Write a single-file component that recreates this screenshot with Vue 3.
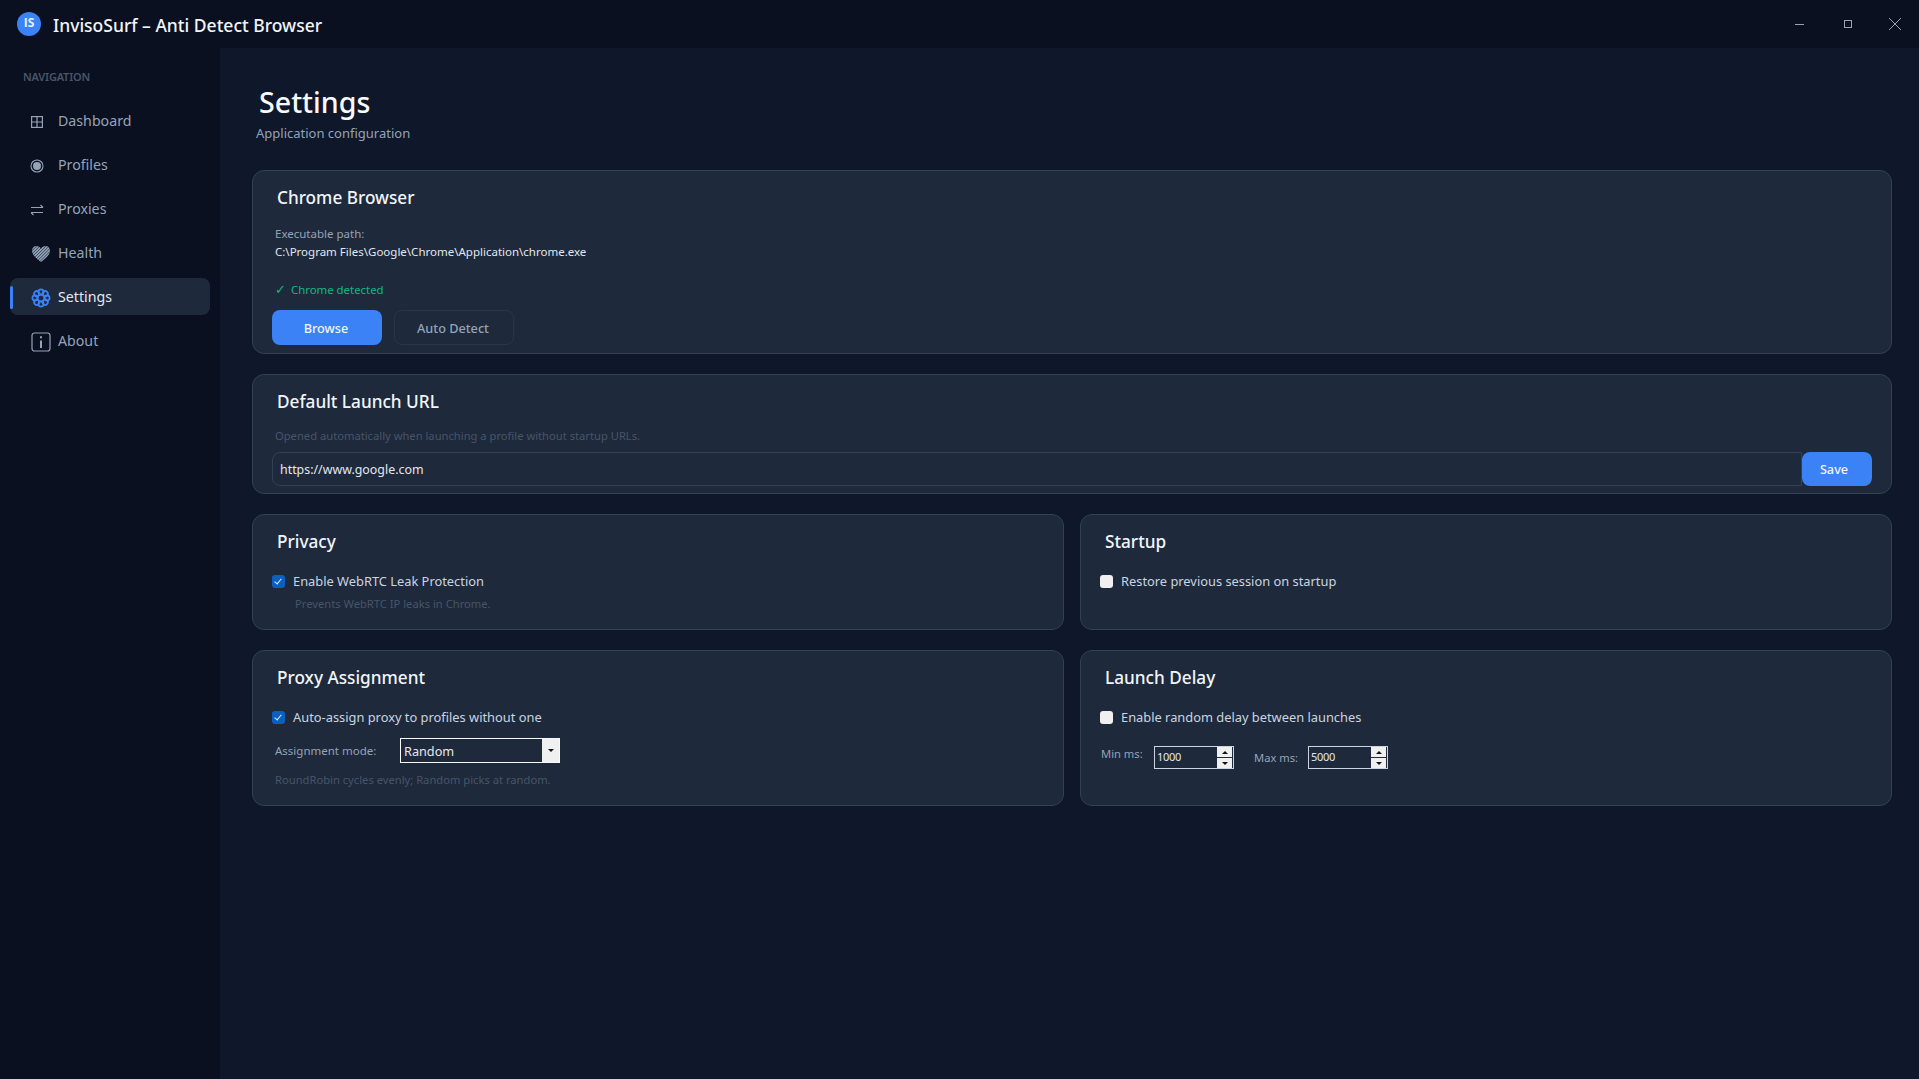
<script setup>
const navItems = [
  { label: "Dashboard", icon: "grid" },
  { label: "Profiles", icon: "radio" },
  { label: "Proxies", icon: "swap" },
  { label: "Health", icon: "heart" },
  { label: "Settings", icon: "gear", active: true },
  { label: "About", icon: "info" }
];
const petals = [0, 45, 90, 135, 180, 225, 270, 315];
</script>

<template>
  <div class="window">
    <header class="titlebar">
      <div class="logo">IS</div>
      <div class="app-title">InvisoSurf – Anti Detect Browser</div>
      <div class="win-controls">
        <svg class="win-min" width="12" height="12" viewBox="0 0 12 12"><path d="M1 6.5h9" stroke="#94a3b8" stroke-width="1" /></svg>
        <svg class="win-max" width="12" height="12" viewBox="0 0 12 12"><rect x="2.5" y="2.5" width="7" height="7" fill="none" stroke="#94a3b8" stroke-width="1" /></svg>
        <svg class="win-close" width="14" height="14" viewBox="0 0 14 14"><path d="M1 1l12 12M13 1L1 13" stroke="#94a3b8" stroke-width="1" /></svg>
      </div>
    </header>

    <div class="body">
      <aside class="sidebar">
        <div class="nav-heading">NAVIGATION</div>
        <nav class="nav">
          <div v-for="item in navItems" :key="item.label" class="nav-item" :class="{ active: item.active }">
            <span class="nav-icon">
              <svg v-if="item.icon === 'grid'" width="14" height="14" viewBox="0 0 14 14" fill="none" stroke="#94a3b8" stroke-width="1.2">
                <rect x="1.6" y="1.6" width="10.8" height="10.8" />
                <path d="M7 1.6v10.8M1.6 7h10.8" />
              </svg>
              <svg v-else-if="item.icon === 'radio'" width="14" height="14" viewBox="0 0 14 14">
                <circle cx="7" cy="7" r="6" fill="none" stroke="#94a3b8" stroke-width="1.1" />
                <circle cx="7" cy="7" r="4" fill="#94a3b8" />
              </svg>
              <svg v-else-if="item.icon === 'swap'" width="14" height="12" viewBox="0 0 14 12" fill="none" stroke="#94a3b8" stroke-width="1.1">
                <path d="M1 3.5h12M10.5 1L13 3.5" />
                <path d="M13 8.5H1M3.5 11L1 8.5" />
              </svg>
              <svg v-else-if="item.icon === 'heart'" class="wide-icon" width="20" height="18" viewBox="0 0 20 18">
                <defs>
                  <pattern id="hatch" width="2.2" height="2.2" patternUnits="userSpaceOnUse" patternTransform="rotate(45)">
                    <rect width="2.2" height="2.2" fill="#94a3b8" />
                    <rect width="0.8" height="2.2" fill="#3b4a5e" />
                  </pattern>
                </defs>
                <path d="M10 17C5 13 1 10 1 5.6 1 3 3 1 5.4 1 7.3 1 9 2 10 3.8 11 2 12.7 1 14.6 1 17 1 19 3 19 5.6 19 10 15 13 10 17z" fill="url(#hatch)" />
              </svg>
              <svg v-else-if="item.icon === 'gear'" class="wide-icon" width="20" height="20" viewBox="0 0 20 20" fill="none" stroke="#3b82f6" stroke-width="1.7">
                <circle v-for="deg in petals" :key="deg" cx="10" cy="4" r="2.6" :transform="`rotate(${deg} 10 10)`" />
                <circle cx="10" cy="10" r="3.4" />
              </svg>
              <svg v-else class="wide-icon" width="20" height="20" viewBox="0 0 20 20" fill="none" stroke="#94a3b8">
                <rect x="1" y="1" width="18" height="18" rx="2.5" stroke-width="1.2" />
                <path d="M10 8.5V16" stroke-width="2" />
                <path d="M10 4.2v2" stroke-width="2" />
              </svg>
            </span>
            <span class="nav-label">{{ item.label }}</span>
          </div>
        </nav>
      </aside>

      <main class="content">
        <h1 class="page-title">Settings</h1>
        <p class="page-sub">Application configuration</p>

        <section class="card chrome-card">
          <h2 class="card-title">Chrome Browser</h2>
          <div class="muted-label">Executable path:</div>
          <div class="path">C:\Program Files\Google\Chrome\Application\chrome.exe</div>
          <div class="detected"><span class="tick">✓</span> Chrome detected</div>
          <div class="btn-row">
            <div class="btn primary browse">Browse</div>
            <div class="btn ghost">Auto Detect</div>
          </div>
        </section>

        <section class="card url-card">
          <h2 class="card-title">Default Launch URL</h2>
          <div class="hint">Opened automatically when launching a profile without startup URLs.</div>
          <div class="url-row">
            <div class="url-input">https://www.google.com</div>
            <div class="btn primary save">Save</div>
          </div>
        </section>

        <div class="two-col">
          <section class="card short-card">
            <h2 class="card-title">Privacy</h2>
            <label class="check-row"><input type="checkbox" class="cb" checked /><span>Enable WebRTC Leak Protection</span></label>
            <div class="hint indented">Prevents WebRTC IP leaks in Chrome.</div>
          </section>
          <section class="card short-card">
            <h2 class="card-title">Startup</h2>
            <label class="check-row"><input type="checkbox" class="cb" /><span>Restore previous session on startup</span></label>
          </section>
        </div>

        <div class="two-col">
          <section class="card tall-card">
            <h2 class="card-title">Proxy Assignment</h2>
            <label class="check-row"><input type="checkbox" class="cb" checked /><span>Auto-assign proxy to profiles without one</span></label>
            <div class="mode-row">
              <span class="muted-label mode-label">Assignment mode:</span>
              <div class="select">
                <span class="select-value">Random</span>
                <span class="select-arrow"><i class="tri down"></i></span>
              </div>
            </div>
            <div class="hint mode-hint">RoundRobin cycles evenly; Random picks at random.</div>
          </section>
          <section class="card tall-card">
            <h2 class="card-title">Launch Delay</h2>
            <label class="check-row"><input type="checkbox" class="cb" /><span>Enable random delay between launches</span></label>
            <div class="delay-row">
              <span class="muted-label min-label">Min ms:</span>
              <div class="spin">
                <span class="spin-value">1000</span>
                <span class="spin-btns"><b><i class="tri up"></i></b><b><i class="tri down"></i></b></span>
              </div>
              <span class="muted-label max-label">Max ms:</span>
              <div class="spin">
                <span class="spin-value">5000</span>
                <span class="spin-btns"><b><i class="tri up"></i></b><b><i class="tri down"></i></b></span>
              </div>
            </div>
          </section>
        </div>
      </main>
    </div>
  </div>
</template>

<style>
html,
body {
  margin: 0;
  background: #0f172a;
}
</style>

<style scoped>
.window {
  width: 100vw;
  height: 100vh;
  display: flex;
  flex-direction: column;
  overflow: hidden;
  background: #0f172a;
  color: #e2e8f0;
  font-family: "Noto Sans", "Open Sans", sans-serif;
}

.titlebar {
  height: 48px;
  flex: none;
  display: flex;
  align-items: center;
  padding-left: 17px;
  background: #0a1020;
}

.logo {
  width: 24px;
  height: 24px;
  border-radius: 50%;
  background: #3b82f6;
  color: #e8f0ff;
  font-family: "Open Sans", sans-serif;
  font-size: 12px;
  font-weight: 700;
  line-height: 22px;
  text-align: center;
}

.app-title {
  margin: 2px 0 0 12px;
  font-size: 17.5px;
  font-weight: 500;
  color: #f1f5f9;
}

.win-controls {
  margin-left: auto;
  display: flex;
  align-items: center;
  margin-right: 17px;
}

.win-min {
  margin-right: 36px;
}

.win-max {
  margin-right: 34px;
}

.body {
  flex: 1;
  display: flex;
  min-height: 0;
}

.sidebar {
  width: 220px;
  flex: none;
  padding: 21px 10px 0;
  box-sizing: border-box;
  background: #0a1020;
}

.nav-heading {
  margin-left: 13px;
  font-size: 11px;
  font-weight: 600;
  line-height: 16px;
  color: #475569;
  letter-spacing: -0.2px;
}

.nav {
  margin-top: 17px;
  display: flex;
  flex-direction: column;
  gap: 7px;
}

.nav-item {
  height: 37px;
  display: flex;
  align-items: center;
  border-radius: 8px;
  font-size: 14.2px;
  color: #94a3b8;
}

.nav-item.active {
  background: #1e293b;
  color: #e2e8f0;
  position: relative;
}

.nav-item.active::before {
  content: "";
  position: absolute;
  left: 0;
  top: 8px;
  bottom: 6px;
  width: 3px;
  border-radius: 2px;
  background: #3b82f6;
}

.nav-icon {
  width: 48px;
  padding-left: 20px;
  padding-top: 3px;
  box-sizing: border-box;
  display: flex;
  align-items: center;
  flex: none;
}

.wide-icon {
  margin-left: 1px;
}

.content {
  flex: 1;
  min-width: 0;
  padding: 34px 27px 0 32px;
  box-sizing: border-box;
}

.page-title {
  margin: 0 0 0 7px;
  font-size: 28.6px;
  font-weight: 500;
  line-height: 40px;
  color: #f8fafc;
}

.page-sub {
  margin: 1px 0 0 4px;
  font-size: 13px;
  line-height: 20px;
  color: #94a3b8;
}

.card {
  box-sizing: border-box;
  border: 1px solid #334155;
  border-radius: 12px;
  background: #1e293b;
  padding: 13px 20px 0;
}

.card-title {
  margin: 0 0 0 4px;
  font-size: 17.2px;
  font-weight: 500;
  line-height: 28px;
  color: #f1f5f9;
}

.chrome-card {
  height: 184px;
  margin-top: 27px;
}

.muted-label {
  font-size: 11.5px;
  line-height: 18px;
  color: #94a3b8;
}

.chrome-card .muted-label {
  margin: 13px 0 0 2px;
}

.path {
  margin: 0 0 0 2px;
  font-size: 11.5px;
  line-height: 18px;
  color: #e2e8f0;
}

.detected {
  margin: 19px 0 0 2px;
  font-size: 11.4px;
  line-height: 18px;
  color: #10b981;
}

.tick {
  margin-right: 2px;
  font-size: 13px;
}

.btn-row {
  margin: 11px 0 0 -1px;
  display: flex;
  gap: 12px;
}

.btn {
  height: 35px;
  box-sizing: border-box;
  display: flex;
  align-items: center;
  justify-content: center;
  border-radius: 8px;
  font-size: 12.7px;
  font-weight: 500;
}

.primary {
  background: #3b82f6;
  color: #f1f5f9;
}

.browse {
  width: 110px;
  padding-right: 2px;
}

.ghost {
  width: 120px;
  padding-right: 2px;
  border: 1px solid #2a3648;
  color: #94a3b8;
}

.url-card {
  height: 120px;
  margin-top: 20px;
}

.hint {
  font-size: 11.2px;
  line-height: 18px;
  color: #475569;
}

.url-card .hint {
  margin: 10.5px 0 0 2px;
}

.url-row {
  display: flex;
  margin: 7.5px -1px 0;
}

.url-input {
  flex: 1;
  height: 34px;
  padding-left: 7px;
  box-sizing: border-box;
  border: 1px solid #334155;
  border-radius: 8px 0 0 8px;
  font-size: 12.4px;
  line-height: 33px;
  color: #e2e8f0;
}

.save {
  width: 70px;
  height: 34px;
  padding-right: 6px;
}

.two-col {
  display: grid;
  grid-template-columns: 1fr 1fr;
  gap: 16px;
  margin-top: 20px;
}

.short-card {
  height: 116px;
}

.tall-card {
  height: 156px;
}

.check-row {
  display: flex;
  align-items: center;
  margin: 15px 0 0 -1px;
  font-size: 12.85px;
  line-height: 20px;
  color: #cbd5e1;
}

.cb {
  appearance: none;
  position: relative;
  width: 13px;
  height: 13px;
  margin: 0 8px 0 0;
  border-radius: 3px;
  background: #f0f0f0;
}

.cb:checked {
  background: #0b5fc1;
}

.cb:checked::after {
  content: "";
  position: absolute;
  left: 4px;
  top: 2px;
  width: 3px;
  height: 6px;
  border: solid #dbeafe;
  border-width: 0 1px 1px 0;
  transform: rotate(40deg);
}

.indented {
  margin: 4px 0 0 22px;
}

.mode-row {
  display: flex;
  align-items: center;
  margin-top: 11px;
}

.mode-label {
  width: 125px;
  margin-left: 2px;
}

.select {
  width: 160px;
  height: 25px;
  box-sizing: border-box;
  display: flex;
  justify-content: space-between;
  border: 1px solid #f8fafc;
  font-size: 12.7px;
  line-height: 24px;
  color: #e2e8f0;
}

.select-value {
  padding-left: 3px;
}

.select-arrow {
  width: 17px;
  display: flex;
  align-items: center;
  justify-content: center;
  background: #f0f0f0;
}

.tri {
  display: block;
  width: 0;
  height: 0;
  border-left: 3px solid transparent;
  border-right: 3px solid transparent;
}

.tri.down {
  border-top: 3px solid #111;
}

.tri.up {
  border-bottom: 3px solid #111;
}

.mode-hint {
  margin: 8px 0 0 2px;
}

.delay-row {
  display: flex;
  align-items: flex-start;
  margin-top: 19px;
}

.min-label {
  width: 53px;
  margin-top: -1px;
  font-size: 11.2px;
}

.max-label {
  width: 54px;
  margin: 3px 0 0 20px;
  font-size: 11.2px;
}

.spin {
  width: 80px;
  height: 23px;
  box-sizing: border-box;
  display: flex;
  justify-content: space-between;
  border: 1px solid #cbd5e1;
  font-size: 11px;
  line-height: 19px;
  color: #e2e8f0;
  letter-spacing: -0.3px;
}

.spin-value {
  padding-left: 2px;
}

.spin-btns {
  width: 15px;
  display: flex;
  flex-direction: column;
  gap: 1px;
  margin-right: 1px;
}

.spin-btns b {
  flex: 1;
  display: flex;
  align-items: center;
  justify-content: center;
  background: #f0f0f0;
}
</style>
